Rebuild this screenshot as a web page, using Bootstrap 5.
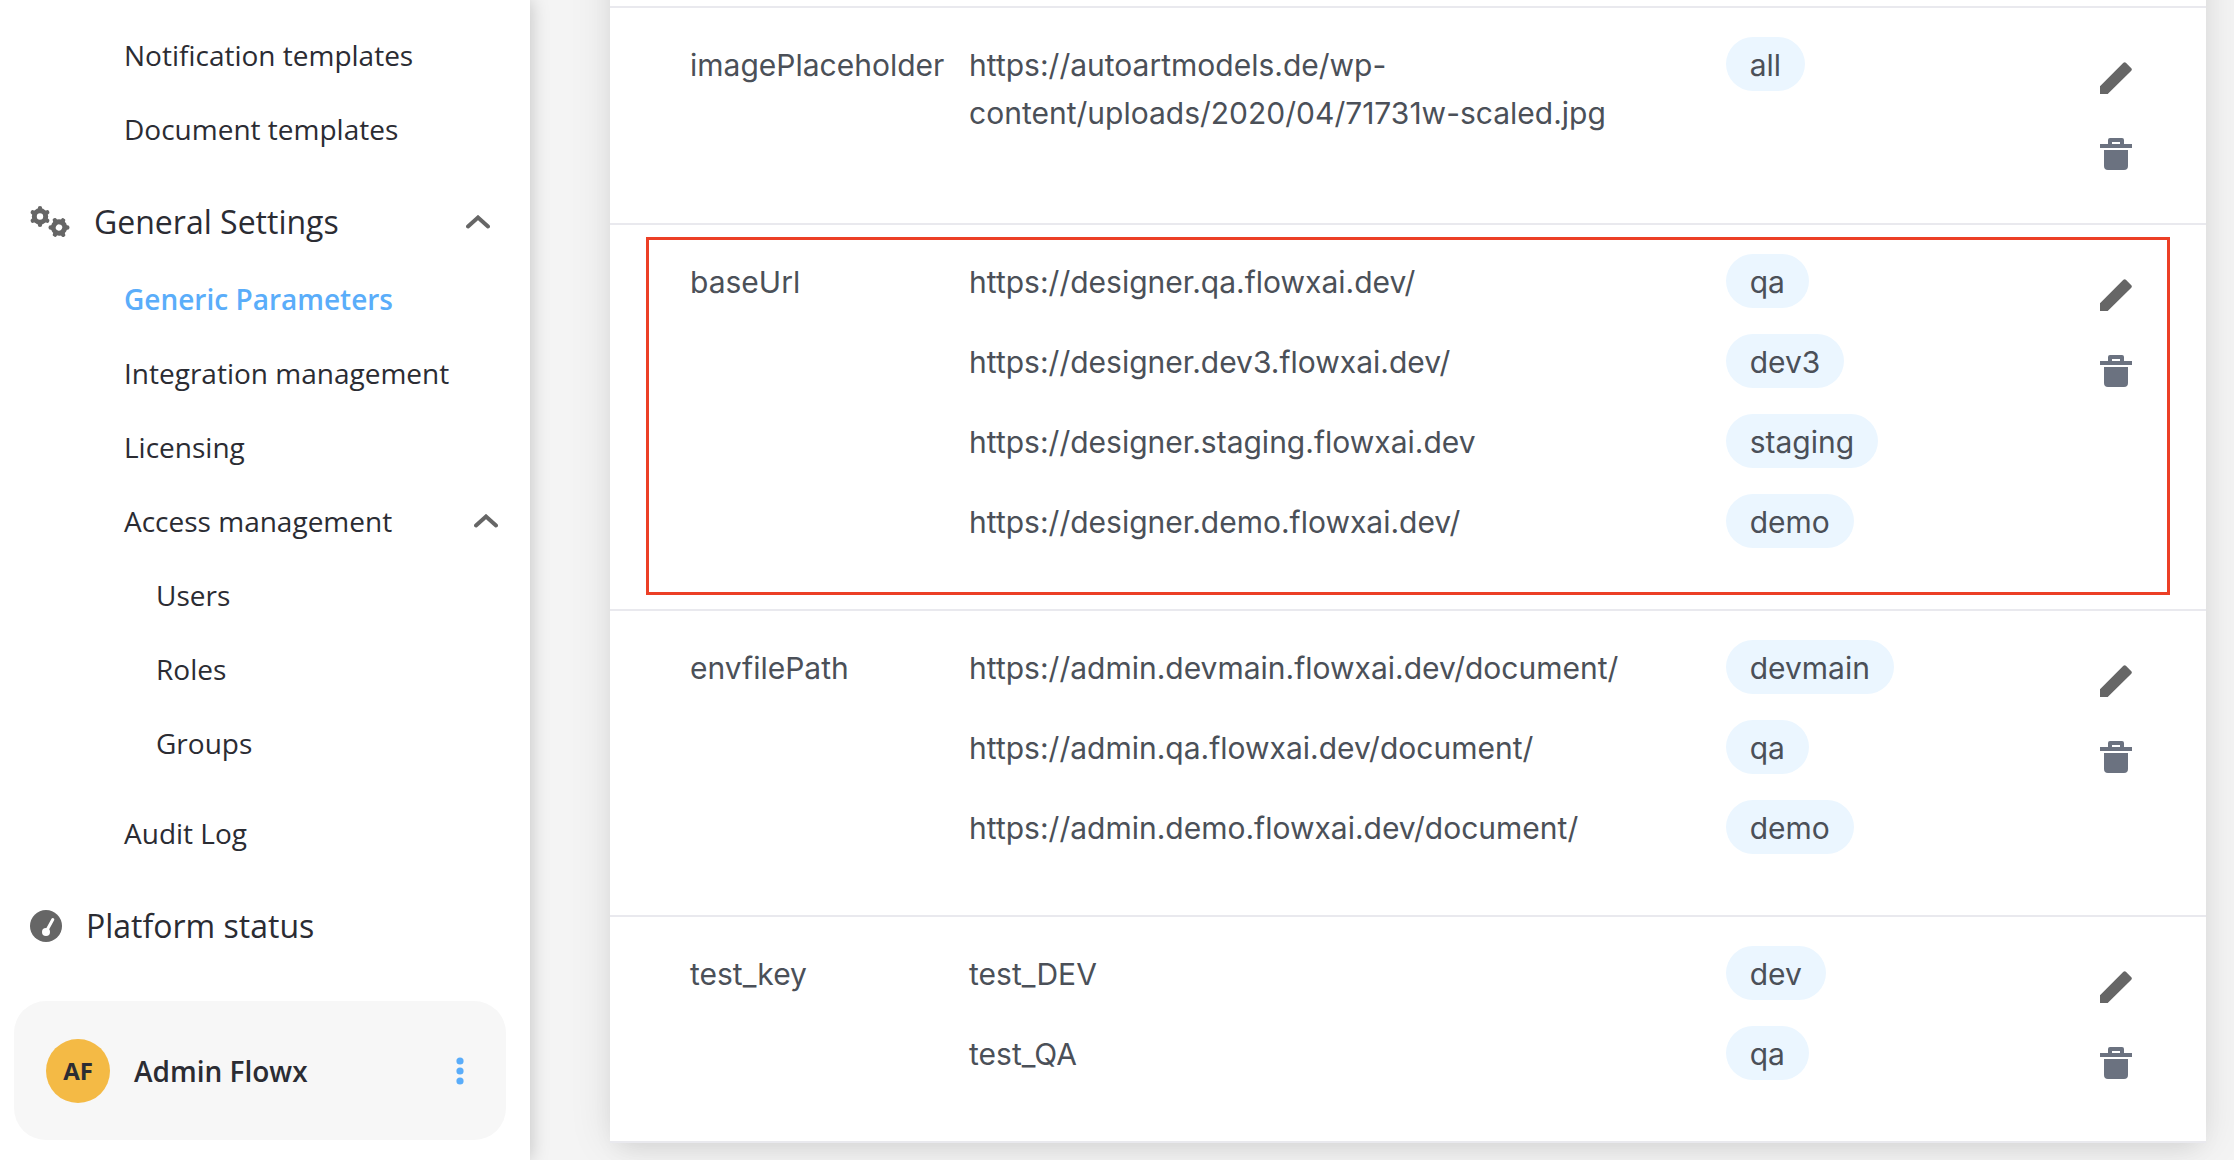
<!DOCTYPE html>
<html lang="en">
<head>
<meta charset="utf-8">
<meta name="viewport" content="width=device-width, initial-scale=1">
<title>Generic Parameters</title>
<link href="https://cdn.jsdelivr.net/npm/bootstrap@5.3.0/dist/css/bootstrap.min.css" rel="stylesheet">
<style>
  body { background: #f4f4f4; color: #2b2c33; font-family: "Open Sans", sans-serif; }
  .sidebar { width: 530px; padding: 18px 24px 20px 14px; box-shadow: 0 0 18px rgba(0,0,0,.22); z-index: 2; }
  .side-link { height: 74px; padding-left: 110px; font-size: 28px; color: #2b2c33; text-decoration: none; }
  .side-head { height: 80px; padding-left: 16px; font-size: 32px; }
  .side-sub { padding-left: 142px; }
  .side-link.current { color: #5aadfa; font-weight: 600; }
  .side-link > svg { color: #666; }
  .side-link > .chevron { margin-right: 8px; }
  .side-head > .chevron { margin-right: 16px; }
  .head-icon { margin-right: 24px; overflow: visible; }
  .user-box { height: 139px; padding: 0 31px 0 32px; border-radius: 32px; background: #f7f7f7; }
  .avatar { width: 64px; height: 64px; margin-right: 24px; background: #f4ba45; font-size: 24px; font-weight: 700; }
  .user-name { font-size: 28px; font-weight: 600; }
  .page { overflow: hidden; }
  .content { padding: 0 28px 16px 80px; }
  .params-card { margin-top: -80px; padding-top: 86px; background: #fff; box-shadow: 0 0 40px rgba(0,0,0,.1), 0 12px 24px -8px rgba(0,0,0,.08); }
  .params { table-layout: fixed; color: #4b5058; font: 400 30px/48px Inter, sans-serif; }
  .params tr { border-top: 2px solid #e9e9ee; }
  .params tr:last-child { border-bottom: 2px solid #e9e9ee; }
  .params td { padding: 29px 0 35px; vertical-align: top; }
  .params td:first-child { padding-left: 80px; }
  .params td:last-child { padding: 32px 52px 31px 0; }
  .params li { min-height: 54px; padding-top: 4px; margin-bottom: 26px; }
  .params .name-cell { padding-top: 33px; }
  .params .envs li { padding-top: 0; }
  .col-key { width: 22.5%; }
  .col-env { width: 18%; }
  .col-act { width: 12.1%; }
  .env-chip { height: 54px; padding: 0 24px; line-height: 56px; vertical-align: top; background: #ebf6ff; }
  .icon-btn { width: 76px; height: 76px; border: 0; color: #6b7280; }
  .icon-btn.edit { color: #666; }
  .highlight { position: absolute; top: 11px; right: 36px; bottom: 15px; left: 36px; border: 3px solid #ec3f26; pointer-events: none; }
</style>
</head>
<body>
<svg class="d-none" aria-hidden="true">
  <symbol id="pencil" viewBox="0 0 32 32"><path d="M0 24.300V32h7.700L31.300 8.700Q32.400 7.400 31.300 6.300L25.900.800Q24.700-.400 23.400.800Z" fill="currentColor"/></symbol>
  <symbol id="trash" viewBox="0 0 32 32"><path fill="currentColor" fill-rule="evenodd" d="M8 6V2q0-2 2-2h12q2 0 2 2v4h8v4H0V6Zm4-2v2h8V4ZM4 12h24v16q0 4-4 4H8q-4 0-4-4Z"/></symbol>
  <symbol id="chevron" viewBox="0 0 24 14"><path d="M2 11.500 12 2.500l10 9" fill="none" stroke="currentColor" stroke-width="4" stroke-linecap="round"/></symbol>
  <symbol id="gear" viewBox="-10.500 -10.500 21 21">
    <circle r="5.700" fill="none" stroke="currentColor" stroke-width="5"/>
    <g stroke="currentColor" stroke-width="4.400" stroke-linecap="round">
      <path d="M0-7V-8.200M0 7V8.200M6-3.500 7.200-4.200M6 3.500 7.200 4.200M-6-3.500-7.200-4.200M-6 3.500-7.200 4.200"/>
    </g>
  </symbol>
</svg>
<div class="page d-flex min-vh-100">
  <nav class="sidebar bg-white d-flex flex-column flex-shrink-0" aria-label="Main">
    <a class="side-link d-flex align-items-center" href="#">Notification templates</a>
    <a class="side-link d-flex align-items-center" href="#">Document templates</a>
    <a class="side-link side-head d-flex align-items-center mt-3" href="#">
      <svg class="head-icon" width="40" height="32" aria-hidden="true"><use href="#gear" x="-.500" y="0" width="21" height="21"/><g transform="rotate(30 29 21.500)"><use href="#gear" x="18.500" y="11" width="21" height="21"/></g></svg>
      General Settings
      <svg class="chevron ms-auto" width="24" height="14" aria-hidden="true"><use href="#chevron"/></svg>
    </a>
    <a class="side-link current d-flex align-items-center" href="#" aria-current="page">Generic Parameters</a>
    <a class="side-link d-flex align-items-center" href="#">Integration management</a>
    <a class="side-link d-flex align-items-center" href="#">Licensing</a>
    <a class="side-link d-flex align-items-center" href="#">Access management
      <svg class="chevron ms-auto" width="24" height="14" aria-hidden="true"><use href="#chevron"/></svg>
    </a>
    <a class="side-link side-sub d-flex align-items-center" href="#">Users</a>
    <a class="side-link side-sub d-flex align-items-center" href="#">Roles</a>
    <a class="side-link side-sub d-flex align-items-center" href="#">Groups</a>
    <a class="side-link d-flex align-items-center mt-3" href="#">Audit Log</a>
    <a class="side-link side-head d-flex align-items-center mt-3" href="#">
      <svg class="head-icon" width="32" height="32" viewBox="0 0 32 32" aria-hidden="true"><circle cx="16" cy="16" r="16" fill="currentColor"/><circle cx="16" cy="22" r="4" fill="#fff"/><path d="M16.500 21 22.800 9.500" stroke="#fff" stroke-width="3" stroke-linecap="round"/></svg>
      Platform status
    </a>
    <div class="user-box d-flex align-items-center mt-auto">
      <span class="avatar rounded-circle d-flex align-items-center justify-content-center">AF</span>
      <span class="user-name">Admin Flowx</span>
      <button class="btn p-0 border-0 ms-auto" type="button" aria-label="Account menu">
        <svg class="d-block" width="30" height="30" viewBox="0 0 30 30" fill="#5aadfa" aria-hidden="true"><circle cx="15" cy="5" r="3.600"/><circle cx="15" cy="15" r="3.600"/><circle cx="15" cy="25" r="3.600"/></svg>
      </button>
    </div>
  </nav>
  <main class="content flex-grow-1">
    <div class="params-card">
      <table class="params w-100">
        <colgroup><col class="col-key"><col><col class="col-env"><col class="col-act"></colgroup>
        <tbody>
        <tr>
          <td class="name-cell">imagePlaceholder</td>
          <td><ul class="list-unstyled m-0"><li>https://autoartmodels.de/wp-content/uploads/2020/04/71731w-scaled.jpg</li></ul></td>
          <td><ul class="envs list-unstyled m-0"><li><span class="env-chip d-inline-block rounded-pill">all</span></li></ul></td>
          <td><div class="d-flex flex-column align-items-end">
            <button class="btn p-0 icon-btn edit" type="button" aria-label="Edit imagePlaceholder"><svg width="32" height="32"><use href="#pencil"/></svg></button>
            <button class="btn p-0 icon-btn" type="button" aria-label="Delete imagePlaceholder"><svg width="32" height="32"><use href="#trash"/></svg></button>
          </div></td>
        </tr>
        <tr class="position-relative">
          <td class="name-cell">baseUrl<span class="highlight"></span></td>
          <td><ul class="list-unstyled m-0"><li>https://designer.qa.flowxai.dev/</li><li>https://designer.dev3.flowxai.dev/</li><li>https://designer.staging.flowxai.dev</li><li>https://designer.demo.flowxai.dev/</li></ul></td>
          <td><ul class="envs list-unstyled m-0"><li><span class="env-chip d-inline-block rounded-pill">qa</span></li><li><span class="env-chip d-inline-block rounded-pill">dev3</span></li><li><span class="env-chip d-inline-block rounded-pill">staging</span></li><li><span class="env-chip d-inline-block rounded-pill">demo</span></li></ul></td>
          <td><div class="d-flex flex-column align-items-end">
            <button class="btn p-0 icon-btn edit" type="button" aria-label="Edit baseUrl"><svg width="32" height="32"><use href="#pencil"/></svg></button>
            <button class="btn p-0 icon-btn" type="button" aria-label="Delete baseUrl"><svg width="32" height="32"><use href="#trash"/></svg></button>
          </div></td>
        </tr>
        <tr>
          <td class="name-cell">envfilePath</td>
          <td><ul class="list-unstyled m-0"><li>https://admin.devmain.flowxai.dev/document/</li><li>https://admin.qa.flowxai.dev/document/</li><li>https://admin.demo.flowxai.dev/document/</li></ul></td>
          <td><ul class="envs list-unstyled m-0"><li><span class="env-chip d-inline-block rounded-pill">devmain</span></li><li><span class="env-chip d-inline-block rounded-pill">qa</span></li><li><span class="env-chip d-inline-block rounded-pill">demo</span></li></ul></td>
          <td><div class="d-flex flex-column align-items-end">
            <button class="btn p-0 icon-btn edit" type="button" aria-label="Edit envfilePath"><svg width="32" height="32"><use href="#pencil"/></svg></button>
            <button class="btn p-0 icon-btn" type="button" aria-label="Delete envfilePath"><svg width="32" height="32"><use href="#trash"/></svg></button>
          </div></td>
        </tr>
        <tr>
          <td class="name-cell">test_key</td>
          <td><ul class="list-unstyled m-0"><li>test_DEV</li><li>test_QA</li></ul></td>
          <td><ul class="envs list-unstyled m-0"><li><span class="env-chip d-inline-block rounded-pill">dev</span></li><li><span class="env-chip d-inline-block rounded-pill">qa</span></li></ul></td>
          <td><div class="d-flex flex-column align-items-end">
            <button class="btn p-0 icon-btn edit" type="button" aria-label="Edit test_key"><svg width="32" height="32"><use href="#pencil"/></svg></button>
            <button class="btn p-0 icon-btn" type="button" aria-label="Delete test_key"><svg width="32" height="32"><use href="#trash"/></svg></button>
          </div></td>
        </tr>
        </tbody>
      </table>
    </div>
  </main>
</div>
<script src="https://cdn.jsdelivr.net/npm/bootstrap@5.3.0/dist/js/bootstrap.bundle.min.js"></script>
</body>
</html>
